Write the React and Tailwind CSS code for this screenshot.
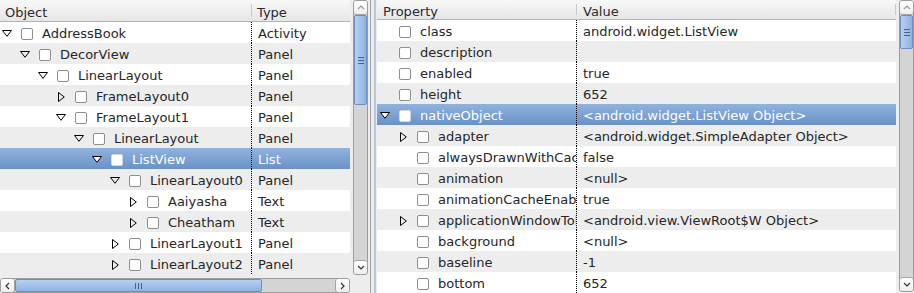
import React from "react";

const leftRows = [
  { l: 0, e: "down", name: "AddressBook", type: "Activity" },
  { l: 1, e: "down", name: "DecorView", type: "Panel" },
  { l: 2, e: "down", name: "LinearLayout", type: "Panel" },
  { l: 3, e: "right", name: "FrameLayout0", type: "Panel" },
  { l: 3, e: "down", name: "FrameLayout1", type: "Panel" },
  { l: 4, e: "down", name: "LinearLayout", type: "Panel" },
  { l: 5, e: "down", name: "ListView", type: "List", sel: true },
  { l: 6, e: "down", name: "LinearLayout0", type: "Panel" },
  { l: 7, e: "right", name: "Aaiyasha", type: "Text" },
  { l: 7, e: "right", name: "Cheatham", type: "Text" },
  { l: 6, e: "right", name: "LinearLayout1", type: "Panel" },
  { l: 6, e: "right", name: "LinearLayout2", type: "Panel" },
];

const rightRows = [
  { l: 0, e: null, name: "class", value: "android.widget.ListView" },
  { l: 0, e: null, name: "description", value: "" },
  { l: 0, e: null, name: "enabled", value: "true" },
  { l: 0, e: null, name: "height", value: "652" },
  { l: 0, e: "down", name: "nativeObject", value: "<android.widget.ListView Object>", sel: true },
  { l: 1, e: "right", name: "adapter", value: "<android.widget.SimpleAdapter Object>" },
  { l: 1, e: null, name: "alwaysDrawnWithCacheEnabled", value: "false" },
  { l: 1, e: null, name: "animation", value: "<null>" },
  { l: 1, e: null, name: "animationCacheEnabled", value: "true" },
  { l: 1, e: "right", name: "applicationWindowToken", value: "<android.view.ViewRoot$W Object>" },
  { l: 1, e: null, name: "background", value: "<null>" },
  { l: 1, e: null, name: "baseline", value: "-1" },
  { l: 1, e: null, name: "bottom", value: "652" },
];

function Expander({ kind, sel }) {
  if (kind === "down") {
    return (
      <svg width="10" height="7" viewBox="0 0 10 7">
        <polygon points="0.5,0.5 9.5,0.5 5,6.3" fill={sel ? "#ffffff" : "none"} stroke="#000" strokeWidth="1" />
      </svg>
    );
  }
  if (kind === "right") {
    return (
      <svg width="7" height="10" viewBox="0 0 7 10" className="ml-[2px]">
        <polygon points="0.5,0.5 6.3,5 0.5,9.5" fill={sel ? "#ffffff" : "none"} stroke="#000" strokeWidth="1" />
      </svg>
    );
  }
  return null;
}

function Check({ sel }) {
  return (
    <div
      className={
        "w-[12px] h-[12px] shrink-0 rounded-[2px] border bg-white " +
        (sel ? "border-[#d0d8e6]" : "border-[#8d8d8d]")
      }
    />
  );
}

function TreeCell({ level, kind, name, sel, base }) {
  return (
    <div
      className="flex items-center h-full overflow-hidden whitespace-nowrap pt-[2px]"
      style={{ paddingLeft: base + level * 18 }}
    >
      <div className="w-[19px] shrink-0 flex items-center">
        <Expander kind={kind} sel={sel} />
      </div>
      <Check sel={sel} />
      <span className="ml-[9px]">{name}</span>
    </div>
  );
}

function HeaderCell({ children, className = "", sep = true }) {
  return (
    <div className={"relative flex items-center h-full pt-[3px] " + className}>
      {children}
      {sep && <div className="absolute right-0 top-[4px] bottom-[4px] w-px bg-[#c9c9c9]" />}
    </div>
  );
}

function rowBg(i, sel) {
  if (sel) return "bg-[linear-gradient(to_bottom,#90b2de,#6a92c7)] text-white";
  return i % 2 === 1 ? "bg-[#ededed]" : "bg-white";
}

function Chevron({ dir }) {
  const pts = {
    up: "1,4 4,1 7,4",
    down: "1,1 4,4 7,1",
    left: "4,1 1,4 4,7",
    right: "1,1 4,4 1,7",
  }[dir];
  const vertical = dir === "up" || dir === "down";
  return (
    <svg width={vertical ? 8 : 5} height={vertical ? 5 : 8} viewBox={vertical ? "0 0 8 5" : "0 0 5 8"}>
      <polyline points={pts} fill="none" stroke={dir === "up" ? "#9a9a9a" : "#333"} strokeWidth="1.2" />
    </svg>
  );
}

function VScroll({ thumb }) {
  return (
    <div className="w-[15px] h-full shrink-0 flex flex-col rounded-[3px] border border-[#9c9c9c] bg-[#d4d4d4] overflow-hidden">
      <div className="h-[14px] shrink-0 bg-[linear-gradient(to_bottom,#ffffff,#eeeeee)] border-b border-[#a3a3a3] rounded-b-[3px] flex items-center justify-center">
        <Chevron dir="up" />
      </div>
      <div
        className="shrink-0 bg-[linear-gradient(to_right,#b7cff1,#8fb2e3)] border border-[#6a8fc4] rounded-[2px] flex items-center justify-center"
        style={{ height: thumb }}
      >
        <svg width="6" height="7" viewBox="0 0 6 7">
          <line x1="0" y1="0.5" x2="6" y2="0.5" stroke="#3f6396" />
          <line x1="0" y1="3.5" x2="6" y2="3.5" stroke="#3f6396" />
          <line x1="0" y1="6.5" x2="6" y2="6.5" stroke="#3f6396" />
        </svg>
      </div>
      <div className="flex-1" />
      <div className="h-[14px] shrink-0 bg-[linear-gradient(to_bottom,#ffffff,#eeeeee)] border-t border-[#a3a3a3] rounded-t-[3px] flex items-center justify-center">
        <Chevron dir="down" />
      </div>
    </div>
  );
}

function HScroll() {
  return (
    <div className="h-[15px] w-[350px] flex rounded-[3px] border border-[#9c9c9c] bg-[#d4d4d4] overflow-hidden">
      <div className="w-[14px] shrink-0 bg-[linear-gradient(to_bottom,#ffffff,#eeeeee)] border-r border-[#a3a3a3] rounded-r-[3px] flex items-center justify-center">
        <Chevron dir="left" />
      </div>
      <div className="w-[247px] shrink-0 bg-[linear-gradient(to_bottom,#b7cff1,#8fb2e3)] border border-[#6a8fc4] rounded-[2px] flex items-center justify-center">
        <svg width="7" height="6" viewBox="0 0 7 6">
          <line x1="0.5" y1="0" x2="0.5" y2="6" stroke="#3f6396" />
          <line x1="3.5" y1="0" x2="3.5" y2="6" stroke="#3f6396" />
          <line x1="6.5" y1="0" x2="6.5" y2="6" stroke="#3f6396" />
        </svg>
      </div>
      <div className="flex-1" />
      <div className="w-[14px] shrink-0 bg-[linear-gradient(to_bottom,#ffffff,#eeeeee)] border-l border-[#a3a3a3] rounded-l-[3px] flex items-center justify-center">
        <Chevron dir="right" />
      </div>
    </div>
  );
}

const headerCls =
  "h-[22px] flex border-b border-[#b3b3b3] bg-[linear-gradient(to_bottom,#f8f8f8,#e6e6e6)] text-[#2a2a2a]";

export default function App() {
  return (
    <div
      className="w-[914px] h-[293px] flex bg-[#ededed] text-[13px] text-[#262626] overflow-hidden leading-none"
      style={{ fontFamily: '"DejaVu Sans", "Noto Sans", sans-serif' }}
    >
      {/* Left panel */}
      <div className="w-[368px] shrink-0 flex flex-col">
        <div className="h-[275px] flex">
          <div className="w-[350px] h-full flex flex-col overflow-hidden">
            <div className={headerCls}>
              <HeaderCell className="w-[252px] pl-[5px]">Object</HeaderCell>
              <HeaderCell className="flex-1 pl-[5px]" sep={false}>Type</HeaderCell>
            </div>
            {leftRows.map((r, i) => (
              <div key={i} className={"h-[21px] shrink-0 flex " + rowBg(i, r.sel)}>
                <div className="w-[251px] shrink-0 h-full">
                  <TreeCell level={r.l} kind={r.e} name={r.name} sel={r.sel} base={2} />
                </div>
                <div className="flex-1 h-full border-l border-dotted border-black flex items-center pl-[6px] pt-[2px]">
                  {r.type}
                </div>
              </div>
            ))}
          </div>
          <div className="w-[3px] shrink-0" />
          <VScroll thumb={90} />
        </div>
        <div className="mt-[3px]">
          <HScroll />
        </div>
      </div>

      {/* Splitter */}
      <div className="w-[9px] shrink-0 flex">
        <div className="w-[2px]" />
        <div className="w-px bg-[#9f9f9f]" />
        <div className="w-[3px]" />
        <div className="w-[2px] bg-[#b6c8e0]" />
        <div className="w-px" />
      </div>

      {/* Right panel */}
      <div className="flex-1 flex">
        <div className="w-[519px] shrink-0 h-full flex flex-col overflow-hidden">
          <div className={headerCls}>
            <HeaderCell className="w-[200px] pl-[6px]">Property</HeaderCell>
            <HeaderCell className="flex-1 pl-[6px]">Value</HeaderCell>
          </div>
          {rightRows.map((r, i) => (
            <div key={i} className={"h-[21px] shrink-0 flex " + rowBg(i, r.sel)}>
              <div className="w-[199px] shrink-0 h-full overflow-hidden">
                <TreeCell level={r.l} kind={r.e} name={r.name} sel={r.sel} base={3} />
              </div>
              <div className="flex-1 h-full border-l border-dotted border-black flex items-center pl-[6px] pt-[2px] whitespace-nowrap overflow-hidden">
                {r.value}
              </div>
            </div>
          ))}
        </div>
        <div className="w-[3px] shrink-0" />
        <div className="h-[292px]">
          <VScroll thumb={34} />
        </div>
      </div>
    </div>
  );
}
